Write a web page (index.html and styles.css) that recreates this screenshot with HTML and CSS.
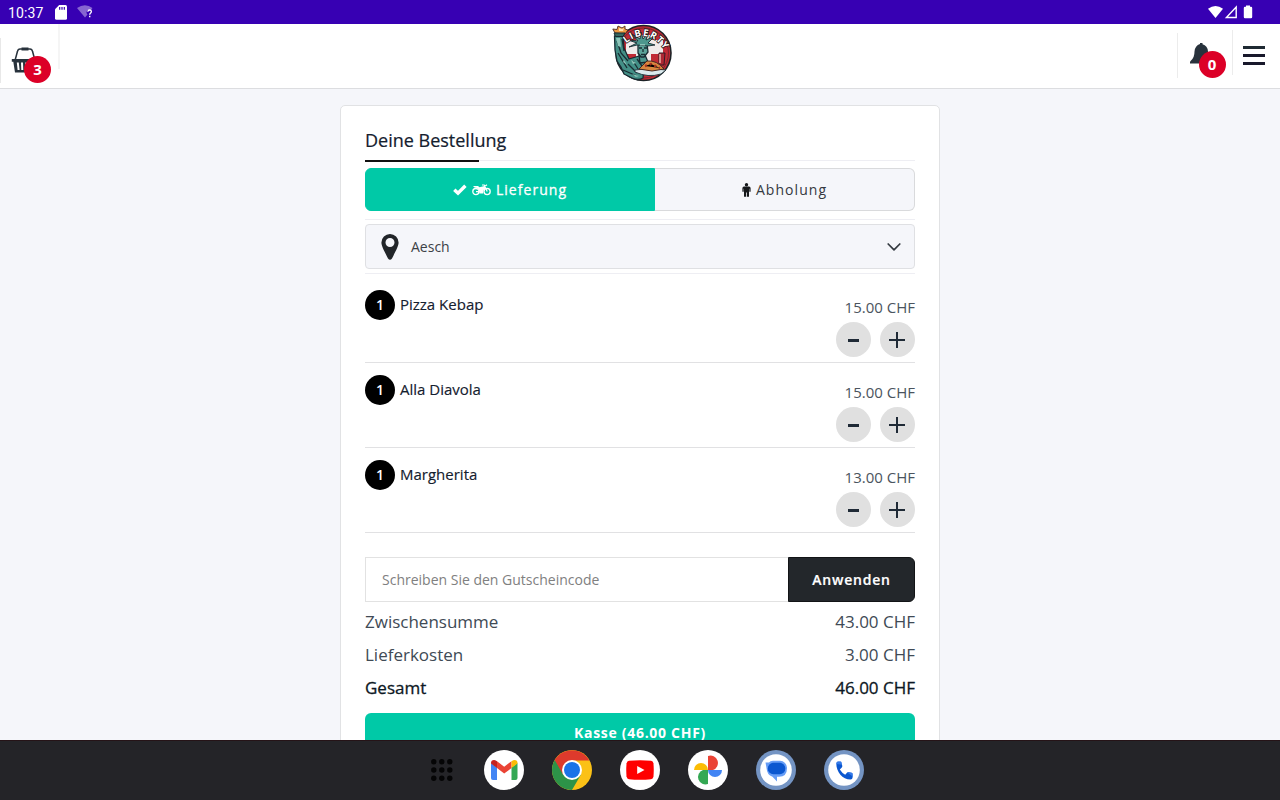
FILE: index.html
```html
<!DOCTYPE html>
<html lang="de">
<head>
<meta charset="utf-8">
<title>Deine Bestellung</title>
<link rel="stylesheet" href="styles.css">
</head>
<body>
<div class="screen">
  <div class="status">
    <span class="clock">10:37</span>
    <svg class="sd" width="12" height="15" viewBox="0 0 12 15"><path fill="#fff" d="M4.2 0H10.5Q12 0 12 1.5V13.300Q12 14.800 10.500 14.800H1.500Q0 14.800 0 13.300V4.300Z"/><path stroke="#3700b3" stroke-width="1.200" d="M4.700 2v2.700M7 2v2.700M9.300 2v2.700"/></svg>
    <svg class="wifi-q" width="17" height="14" viewBox="0 0 17 14"><path fill="#fff" opacity=".4" d="M0 3Q8-2.500 15.500 3L13.500 5.500Q9.500 4 9.500 8L10.500 9.500 8 12.500Z"/><path fill="none" stroke="#fff" stroke-width="1.300" d="M10.800 6.800Q11 5 12.700 5T14.400 6.800C14.400 8 12.700 8 12.700 9.700"/><path fill="#fff" d="M12 10.700h1.400v1.500H12z"/></svg>
    <span class="fill"></span>
    <svg width="46" height="16" viewBox="0 0 46 16"><path fill="#fff" d="M0 4.800Q7.500-.8 15 4.800L7.500 14Z"/><path fill="none" stroke="#fff" stroke-width="1.400" d="M28.200 3V13.500H18.400Z"/><path fill="#fff" d="M38 1.500h4v1.200h1q1.200 0 1.200 1.200v9.200q0 1.200-1.200 1.200h-6q-1.200 0-1.200-1.200V3.900q0-1.200 1.200-1.200h1z"/></svg>
  </div>

  <header class="top">
    <div class="basket">
      <svg width="30" height="28" viewBox="0 0 30 28"><path fill="none" stroke="#28323c" stroke-width="1.500" d="M4 13.500 6.500 4.300Q7 2 9 2H19Q21 2 21.500 4.300L24 13.500"/><path fill="#28323c" d="M10.500.5h7v3h-7zM.8 12h26v2.800h-1.500L24 25.500H4L2.300 14.800H.8z"/><path stroke="#fff" stroke-width="2" d="M6.800 15.500l.8 7.500M11 15.500l.3 7.500M15.300 15.500v7.500"/></svg>
      <span class="count">3</span>
    </div>
    <svg class="logo" width="62" height="58" viewBox="0 0 62 58">
      <circle cx="31.500" cy="29" r="27.500" fill="#c02a35" stroke="#1c2226" stroke-width="1.600"/>
      <circle cx="31.500" cy="29" r="25" fill="none" stroke="#7a252d" stroke-width="1"/>
      <path fill="#efebea" d="M24 11h15v5h12v14H39v10H24V30H14V17h10z"/>
      <g stroke="#172a31" stroke-width="1.300" stroke-linejoin="round">
        <path fill="#438f86" d="M2.500 12 11 11 12 24 17 35 27 32 33 36 38 39 32 44 31 54 Q26 57 20 54L12 50 9 43 5 37 3 26Z"/>
        <path fill="#4d978d" d="M27 31H33L36 38 28 39Z"/>
        <path fill="#5ba398" d="M26 20H35L36 28 32 33H29L26 29Z"/>
        <path stroke-width=".9" fill="#4d978d" d="M25 21 17 23 25 19 16 16 26 17 20 10 28 15 29 8 31 15 36 9 34 16 43 12 36 19 43 21 36 22Z"/>
      </g>
      <path fill="none" stroke="#192d33" stroke-width="1.300" d="M27 24h3M32 24h3M31 25v3M29 30.500h4M5 17l4 12 7 8M10 15l2 12M6 29l9 15M16 40l9 9M21 37l7 11M11 46l14 6M25 35l5 7"/>
      <path fill="#8dc5b9" d="M4 14h4l1 9-3-1zM28 20h5v1.500h-5zM19 36l5 3-3 1zM12 36l3 5-4-3zM20 50l7 2-3 1z"/>
      <path fill="#ed9a43" stroke="#4b2a25" stroke-width=".9" d="M3 9 .8 5 5 5.500 6 2 10 4 13 2 13 5 16 6 13 10Z"/>
      <path fill="#fbe0ad" d="M7 4l3 1 2-1-1 3H7z"/>
      <path fill="#36665f" stroke="#172a31" d="M2 9h11l-2 3.500H3.500z"/>
      <path fill="#ad2734" stroke="#321b25" d="M47 29h6l-1 12h-5z"/><path stroke="#e8b4a9" stroke-width="1.500" d="M48 30v9"/>
      <path fill="#dbe9ed" stroke="#21343c" stroke-width=".9" d="M23 46Q38 43 54 46L49 50Q36 54 23 48Z"/>
      <path fill="#d9873f" stroke="#482822" d="M27 45 35 37Q45 36 52 45L40 47Z"/>
      <path stroke="#a83022" stroke-width="2.500" stroke-dasharray="2 3" d="M33 42 39 40 48 44"/>
      <path id="arc" fill="none" d="M14 19.500Q36 1 54 28"/>
      <text class="logo-text"><textPath href="#arc">LIBERTY</textPath></text>
    </svg>
    <div class="actions">
      <div class="bell">
        <svg width="24" height="26" viewBox="0 0 24 26"><path fill="#28323c" d="M10 2V1h2.500v1.300Q17.500 3.500 18 9.500 18 14.500 21 18 22.500 19.500 22 21.500H0Q-.5 20 1 18.500 4.500 15.500 4.500 9.500 5 3.500 10 2Z"/></svg>
        <span class="count">0</span>
      </div>
      <div class="burger"><i></i><i></i><i></i></div>
    </div>
  </header>

  <main class="main">
    <section class="card">
      <h1 class="title">Deine Bestellung</h1>
      <div class="tabs">
        <div class="tab on">
          <svg width="14" height="12" viewBox="0 0 14 12"><path fill="none" stroke="#fff" stroke-width="3.400" d="M1.300 5.700 5 9.200 12.400 1.800"/></svg>
          <svg width="19" height="12" viewBox="0 0 19 12"><g fill="none" stroke="#fff"><circle cx="3.900" cy="7.600" r="3.100" stroke-width="1.300"/><circle cx="15.100" cy="7.600" r="3.100" stroke-width="1.300"/><path stroke-width="1.200" d="M10 1h2.200l3 6.600M12.500 2.500 15 .8M4 7.600h3"/></g><path fill="#fff" d="M1 2h5l1.500 1.200L12.500 2l1.200 2.500-2 1.500-.7 3.500H7.500L6.800 6 5 4 2.500 3.500z"/></svg>
          <span>Lieferung</span>
        </div>
        <div class="tab">
          <svg width="9" height="14" viewBox="0 0 9 14"><circle cx="4.500" cy="1.700" r="1.700" fill="#16181b"/><path fill="#16181b" d="M2 3.600h5Q8.600 3.600 8.600 5.200V8.800H7.300V5.800H7V13.800H4.900V9.500H4.100V13.800H2V5.800H1.700V8.800H.4V5.200Q.4 3.600 2 3.600Z"/></svg>
          <span>Abholung</span>
        </div>
      </div>
      <div class="place">
        <div class="select">
          <svg width="18" height="26" viewBox="0 0 18 26"><path fill="#212529" fill-rule="evenodd" d="M9 0a8.600 8.600 0 0 1 8.600 8.600C17.600 12 14.500 17.500 11 24.500Q9 27 7 24.500C3.500 17.500.4 12 .4 8.600A8.600 8.600 0 0 1 9 0Zm0 4a4.500 4.500 0 1 0 0 9 4.500 4.500 0 0 0 0-9Z"/></svg>
          <span>Aesch</span>
          <svg class="chev" width="14" height="8" viewBox="0 0 14 8"><path fill="none" stroke="#343a40" stroke-width="1.700" stroke-linecap="round" stroke-linejoin="round" d="M1.200 1 7 6.800 12.800 1"/></svg>
        </div>
      </div>

      <div class="item">
        <span class="qty">1</span><span class="name">Pizza Kebap</span>
        <div class="side"><span class="price">15.00 CHF</span><div class="btns"><b class="rnd minus"></b><b class="rnd plus"></b></div></div>
      </div>
      <div class="item">
        <span class="qty">1</span><span class="name">Alla Diavola</span>
        <div class="side"><span class="price">15.00 CHF</span><div class="btns"><b class="rnd minus"></b><b class="rnd plus"></b></div></div>
      </div>
      <div class="item">
        <span class="qty">1</span><span class="name">Margherita</span>
        <div class="side"><span class="price">13.00 CHF</span><div class="btns"><b class="rnd minus"></b><b class="rnd plus"></b></div></div>
      </div>

      <div class="coupon">
        <div class="code">Schreiben Sie den Gutscheincode</div>
        <div class="apply">Anwenden</div>
      </div>
      <div class="sum"><span>Zwischensumme</span><span>43.00 CHF</span></div>
      <div class="sum"><span>Lieferkosten</span><span>3.00 CHF</span></div>
      <div class="sum total"><span>Gesamt</span><span>46.00 CHF</span></div>
      <div class="pay">Kasse (46.00 CHF)</div>
    </section>
  </main>

  <nav class="dock">
    <svg class="apps" width="22" height="22" viewBox="0 0 22 22"><g fill="#050506"><circle cx="2.800" cy="2.800" r="2.700"/><circle cx="10.800" cy="2.800" r="2.700"/><circle cx="18.800" cy="2.800" r="2.700"/><circle cx="2.800" cy="11" r="2.700"/><circle cx="10.800" cy="11" r="2.700"/><circle cx="18.800" cy="11" r="2.700"/><circle cx="2.800" cy="19.200" r="2.700"/><circle cx="10.800" cy="19.200" r="2.700"/><circle cx="18.800" cy="19.200" r="2.700"/></g></svg>
    <svg width="40" height="40" viewBox="0 0 40 40"><circle cx="20" cy="20" r="20" fill="#fff"/><path fill="#4285f4" d="M7 13l6 4.500V30H9q-2 0-2-2z"/><path fill="#34a853" d="M27.500 17.500l6-4.500v15q0 2-2 2h-4z"/><path fill="#ea4335" d="M13 11.200l7.200 5.500 7.300-5.500v6.800l-7.300 5.600L13 18z"/><path fill="#c5221f" d="M7 13q0-3 3-3 1 0 3 1.200V18l-6-4.500z"/><path fill="#fbbc04" d="M33.500 13q0-3-3-3-1 0-3 1.200V18l6-4.500z"/></svg>
    <svg width="40" height="40" viewBox="0 0 40 40"><circle cx="20" cy="20" r="20" fill="#fbc116"/><path fill="#2d9348" d="M2.700 10A20 20 0 0 0 20 40L28.700 25 20 20Z"/><path fill="#de3a2c" d="M2.700 10A20 20 0 0 1 37.300 10.500H20L11.300 25Z"/><circle cx="20" cy="20" r="10" fill="#fff"/><circle cx="20" cy="20" r="8" fill="#1a73e8"/></svg>
    <svg width="40" height="40" viewBox="0 0 40 40"><circle cx="20" cy="20" r="20" fill="#fff"/><path fill="#f00" d="M9 10.700Q20 9.600 31 10.700 33 11 33.500 13.500 34 20 33.500 26.500 33 29 31 29.300 20 30.400 9 29.300 7 29 6.500 26.500 6 20 6.500 13.500 7 11 9 10.700Z"/><path fill="#fff" d="M17.200 16v8L24.500 20z"/></svg>
    <svg width="40" height="40" viewBox="0 0 40 40"><circle cx="20" cy="20" r="20" fill="#fff"/><path fill="#ea4335" d="M20 6a7.300 7.300 0 0 1 5 14H20z"/><path fill="#4285f4" d="M34 20a7 7 0 0 1-14 0z"/><path fill="#34a853" d="M20 34a7.300 7.300 0 0 1-5-14H20z"/><path fill="#fbbc04" d="M6 20a7 7 0 0 1 14 0z"/></svg>
    <svg width="40" height="40" viewBox="0 0 40 40"><circle cx="20" cy="20" r="20" fill="#7494c3"/><circle cx="20" cy="20" r="15.800" fill="#fff"/><path fill="#669df6" d="M9.500 12.500H13Q14 10.800 17 10.800H24A7 7 0 0 1 31 18Q31 26.800 23 26.800H21V31.500L16.500 26.800Q11 25 10.500 18Z"/><rect x="11.800" y="12.800" width="17.500" height="11.400" rx="5.500" fill="#0b57d0"/></svg>
    <svg width="40" height="40" viewBox="0 0 40 40"><circle cx="20" cy="20" r="20" fill="#7494c3"/><circle cx="20" cy="20" r="15.800" fill="#fff"/><path fill="#0b57d0" d="M13.800 11.500H16.300q1 0 1.200 1l.8 3.500q.1.800-.5 1.400L15.800 19.500Q18 23 21.200 24.700l2-2.200q.6-.6 1.400-.4l3.100.7q1 .3 1 1.300v2.800Q28.500 29.500 26.500 29.500C18.500 29.500 12.300 22 12.300 13.500Q12.300 11.800 13.800 11.500Z"/><path fill="#4c8df6" d="M13.800 11.500H16.300q1 0 1.200 1l.5 2.200-5.700-.7q0-2 1.500-2.500zM23.200 22.500l1.400-.4 3.100.7q1 .3 1 1.300v2.500z" opacity=".65"/></svg>
  </nav>
</div>
</body>
</html>
```
FILE: styles.css
```css
* { box-sizing: border-box; }
body { margin: 0; font-family: "Open Sans", "Noto Sans", sans-serif; color: #1f2a36; }
svg { display: block; flex: none; }
.screen { width: 1280px; height: 800px; display: flex; flex-direction: column; overflow: hidden; background: #f5f6fa; }

.status { height: 24px; flex: none; display: flex; align-items: center; background: #3700b3; padding: 0 26px 0 8px; color: #fff; }
.clock { width: 47px; font: 400 14px/24px Roboto, sans-serif; padding-top: 1px; letter-spacing: .1px; }
.wifi-q { margin-left: 10px; }
.fill { flex: 1; }

.top { height: 65px; flex: none; display: grid; grid-template-columns: 60px 1fr 103px; background: #fff; border-bottom: 1px solid #dcdde0; }
.basket { position: relative; height: 45px; padding: 23px 0 0 11px; border-right: 2px solid #f5f5f5; }
.basket::before { content: ""; position: absolute; left: 0; top: 14px; width: 1px; height: 45px; background: #e8e8e8; }
.count { position: absolute; width: 27px; height: 27px; border-radius: 50%; background: #dc0027; color: #fff; font-weight: 700; font-size: 15px; line-height: 27px; text-align: center; }
.basket .count { left: 24px; top: 32px; }
.logo { margin-left: 552px; overflow: visible; }
.logo-text { font: 700 9.500px "Open Sans", sans-serif; fill: #fff; stroke: #25191c; stroke-width: 1.500px; paint-order: stroke; letter-spacing: 1.200px; }
.actions { display: flex; }
.bell { position: relative; width: 56px; height: 45px; margin-top: 9px; padding: 9px 0 0 12px; border-left: 1px solid #ececec; }
.bell::after { content: ""; position: absolute; right: 0; top: -3px; width: 1px; height: 45px; background: #ececec; }
.bell .count { left: 20.500px; top: 18px; }
.burger { display: flex; flex-direction: column; gap: 5px; padding: 22px 0 0 10px; }
.burger i { width: 22px; height: 3px; background: #1f2a33; }
.burger i:nth-child(n+2) { background: #18182b; }

.main { flex: 1; min-height: 0; overflow: hidden; padding-top: 16px; display: flex; justify-content: center; align-items: flex-start; }
.card { width: 600px; height: 700px; background: #fff; border: 1px solid #e1e2e4; border-radius: 5px; padding: 20px 24px; }
.title { position: relative; margin: 0; height: 35px; border-bottom: 1px solid #eeeef3; font-size: 18px; line-height: 29px; font-weight: 400; color: #14202e; -webkit-text-stroke: .2px #14202e; }
.title::after { content: ""; position: absolute; left: 0; bottom: -1.500px; width: 114px; height: 2px; background: #111; }

.tabs { display: flex; height: 43px; margin-top: 7px; }
.tab { display: flex; align-items: center; justify-content: center; gap: 5px; width: 260px; background: #f5f6fa; border: 1px solid #d9dadc; border-left: 0; border-radius: 0 6px 6px 0; font-size: 14px; letter-spacing: 1.050px; color: #343940; }
.tab.on { width: 290px; background: #00c9a7; color: #fff; border: 1px solid #00c9a7; border-radius: 6px 0 0 6px; -webkit-text-stroke: .3px #fff; }
.place { margin-top: 8px; padding: 4px 0; border-top: 1px solid #eeeef3; border-bottom: 1px solid #eeeef3; height: 55px; }
.select { height: 45px; display: flex; align-items: center; padding: 0 13px 0 15px; background: #f5f6fa; border: 1px solid #dfe0e3; border-radius: 4px; font-size: 14px; color: #3c4146; }
.select span { margin-left: 12px; }
.chev { margin-left: auto; }

.item { height: 85px; display: flex; border-bottom: 1px solid #e1e1e3; padding-top: 12px; }
.place + .item { height: 89px; padding-top: 16px; }
.qty { width: 30px; height: 30px; border-radius: 50%; background: #000; color: #fff; font-size: 14px; font-weight: 600; line-height: 30px; text-align: center; }
.name { margin-left: 5px; font-size: 15px; line-height: 29px; color: #14202e; -webkit-text-stroke: .15px #14202e; }
.side { margin-left: auto; text-align: right; }
.price { display: block; margin-top: 7px; font-size: 15px; line-height: 20px; color: #4b545e; }
.btns { display: flex; gap: 9px; margin-top: 5px; justify-content: flex-end; }
.rnd { width: 35px; height: 35px; border-radius: 50%; background: linear-gradient(#1f2a36, #1f2a36) 12px 17px / 11px 3px no-repeat #e0e0e0; }
.plus { background: linear-gradient(#1f2a36, #1f2a36) 9px 17px / 16px 2px no-repeat, linear-gradient(#1f2a36, #1f2a36) 16px 10px / 2px 16px no-repeat #e0e0e0; }

.coupon { display: flex; height: 45px; margin: 24px 0 3px; }
.code { flex: 1; border: 1px solid #e2e2e2; border-right: 0; padding-left: 16px; font-size: 14px; line-height: 43px; color: #808080; }
.apply { width: 127px; background: #23272b; border: 1px solid #121416; border-radius: 0 6px 6px 0; color: #fff; font-weight: 600; font-size: 14px; letter-spacing: .800px; line-height: 43px; text-align: center; -webkit-text-stroke: .2px #fff; }
.sum { display: flex; justify-content: space-between; height: 33px; font-size: 17px; line-height: 33px; color: #404a55; }
.total { color: #0c1723; -webkit-text-stroke: .3px #0c1723; }
.pay { height: 43px; margin-top: 9px; border-radius: 6px; background: #00c9a7; color: #fff; font-size: 14px; font-weight: 700; letter-spacing: .7px; line-height: 40px; text-align: center; }

.dock { height: 60px; flex: none; display: flex; align-items: center; gap: 28px; padding: 0 0 1px 431px; background: #242428; border-top: 1px solid #251317; }
.apps { margin-right: 3px; }
```
